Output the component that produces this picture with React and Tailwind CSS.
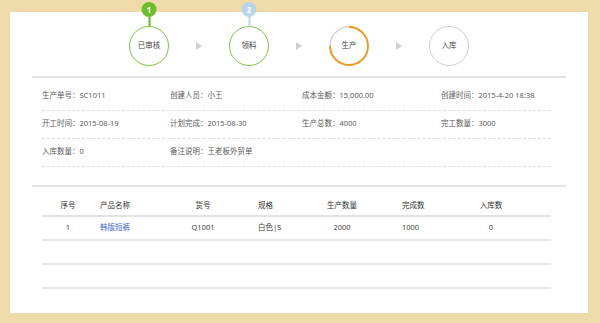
import React from "react";

const font = { fontFamily: '"Noto Sans", "Noto Sans CJK SC", sans-serif' };

const steps = [
  { label: "已审核", state: "done", badge: "1", badgeColor: "bg-[#6dbd2d]", lineColor: "bg-[#6dbd2d]" },
  { label: "领料", state: "done", badge: "2", badgeColor: "bg-[#b9d5ea]", lineColor: "bg-[#b9d5ea]" },
  { label: "生产", state: "active" },
  { label: "入库", state: "todo" },
];

const info = [
  [
    ["生产单号", "SC1011"],
    ["创建人员", "小王"],
    ["成本金额", "15,000.00"],
    ["创建时间", "2015-4-20 18:38"],
  ],
  [
    ["开工时间", "2015-08-19"],
    ["计划完成", "2015-08-30"],
    ["生产总数", "4000"],
    ["完工数量", "3000"],
  ],
  [
    ["入库数量", "0"],
    ["备注说明", "王老板外贸单"],
  ],
];

const cols = "grid grid-cols-[52px_76px_66px_74px_64px_76px_82px_1fr]";

const Arrow = () => (
  <div className="w-0 h-0 border-y-[4px] border-y-transparent border-l-[6px] border-l-[#cfcfcf]" />
);

const StepCircle = ({ step }) => {
  if (step.state === "active") {
    return (
      <div className="relative w-10 h-10 flex items-center justify-center">
        <svg width="40" height="40" viewBox="0 0 40 40" className="absolute inset-0">
          <circle cx="20" cy="20" r="19" fill="none" stroke="#d6d6d6" strokeWidth="1.5" />
          <path d="M20 1 A19 19 0 1 1 1 20" fill="none" stroke="#f0961a" strokeWidth="1.8" />
        </svg>
        <span className="relative text-[7.5px] text-[#444]">{step.label}</span>
      </div>
    );
  }
  const border = step.state === "done" ? "border-[#7cc23e]" : "border-[#cfcfcf]";
  return (
    <div className={`relative w-10 h-10 rounded-full border-[1.5px] ${border} flex items-center justify-center`}>
      <span className="text-[7.5px] text-[#444]">{step.label}</span>
      {step.badge && (
        <div className="absolute left-1/2 -translate-x-1/2 -top-[25px] flex flex-col items-center">
          <div className={`w-[15px] h-[15px] rounded-full ${step.badgeColor} text-white text-[8px] font-bold flex items-center justify-center`}>
            {step.badge}
          </div>
          <div className={`w-[2px] h-[10px] ${step.lineColor}`} />
        </div>
      )}
    </div>
  );
};

export default function App() {
  return (
    <div className="w-[600px] h-[323px] bg-[#efdaa9] pt-[12px] pl-[10px] pr-[12px] pb-[10px]" style={font}>
      <div className="bg-white h-full">
        {/* steps */}
        <div className="pt-[14px] flex items-center justify-center">
          {steps.map((s, i) => (
            <React.Fragment key={s.label}>
              <StepCircle step={s} />
              {i < steps.length - 1 && (
                <div className="w-[60px] flex justify-center">
                  <Arrow />
                </div>
              )}
            </React.Fragment>
          ))}
        </div>

        <div className="mx-[22px] mt-[10px] h-[2px] bg-[#e3e3e3]" />

        {/* info */}
        <div className="ml-[32px] w-[509px] mt-[5px]">
          {info.map((row, ri) => (
            <div
              key={ri}
              className="grid grid-cols-[128px_132px_139px_1fr] h-[28px] items-center border-b border-dashed border-[#dcdcdc] text-[7.5px] text-[#5a5a5a]"
            >
              {row.map(([k, v]) => (
                <div key={k} className="-mt-[2px] whitespace-nowrap">
                  {k}：{v}
                </div>
              ))}
            </div>
          ))}
        </div>

        <div className="mx-[22px] mt-[18px] h-[2px] bg-[#e3e3e3]" />

        {/* table */}
        <div className="ml-[32px] w-[509px] mt-[10px] text-[7.5px]">
          <div className={`${cols} h-[20px] items-center border-b-2 border-[#e3e3e3] text-[#333]`}>
            <div className="text-center">序号</div>
            <div className="pl-[6px]">产品名称</div>
            <div className="text-center">货号</div>
            <div className="pl-[22px]">规格</div>
            <div className="text-center">生产数量</div>
            <div className="pl-[28px]">完成数</div>
            <div className="text-center">入库数</div>
            <div />
          </div>
          <div className={`${cols} h-[24px] items-center border-b-2 border-[#e6e6e6] text-[#444]`}>
            <div className="text-center">1</div>
            <div className="pl-[6px] text-[#3a66d6]">韩版短裤</div>
            <div className="text-center">Q1001</div>
            <div className="pl-[22px]">白色|S</div>
            <div className="text-center">2000</div>
            <div className="pl-[28px]">1000</div>
            <div className="text-center">0</div>
            <div />
          </div>
          <div className="h-[24px] border-b-2 border-[#e6e6e6]" />
          <div className="h-[24px] border-b-2 border-[#e6e6e6]" />
        </div>
      </div>
    </div>
  );
}
